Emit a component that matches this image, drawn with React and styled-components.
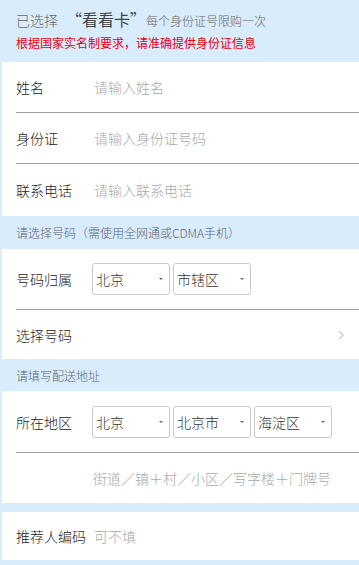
import React from "react";
import styled, { createGlobalStyle } from "styled-components";

const Global = createGlobalStyle`
  html, body { margin: 0; padding: 0; background: #d9ecfb; }
  body { font-family: "Noto Sans CJK SC", "Noto Sans", sans-serif; font-weight: 300; }
  * { box-sizing: border-box; }
`;

const Page = styled.div`
  width: 359px;
  height: 565px;
  overflow: hidden;
  background: #d9ecfb;
`;

const Header = styled.div`
  padding: 8px 16px 0 16px;
  height: 62px;
`;

const Title = styled.div`
  color: #666;
  font-size: 14px;
  line-height: 22px;
  white-space: nowrap;
`;

const Strong = styled.span`
  color: #444;
  font-size: 16px;
  font-weight: 400;
  margin-left: 8px;
`;

const Small = styled.span`
  font-size: 12px;
`;

const Warn = styled.div`
  color: #e60012;
  font-size: 12px;
  font-weight: 400;
  line-height: 20px;
  margin-top: 1px;
`;

const Panel = styled.div`
  background: #fff;
  margin-left: 2px;
  margin-top: ${(p) => p.$gap || 0}px;
`;

const Row = styled.div`
  display: flex;
  align-items: center;
  height: ${(p) => p.$h || 51}px;
  margin-left: 14px;
  border-bottom: ${(p) => (p.$last ? "none" : "1px solid #a0a0a0")};
`;

const Label = styled.div`
  width: ${(p) => p.$w || 78}px;
  flex: none;
  color: #222;
  font-size: 14px;
`;

const Placeholder = styled.div`
  color: #a8a8a8;
  font-size: 14px;
  white-space: nowrap;
`;

const Section = styled.div`
  height: ${(p) => p.$h || 32}px;
  display: flex;
  align-items: center;
  padding-left: 16px;
  color: #5c6670;
  font-size: 12px;
`;

const Selects = styled.div`
  display: flex;
  gap: 3px;
`;

const SelectBox = styled.div`
  width: 78px;
  height: 32px;
  border: 1px solid #c9c9c9;
  border-radius: 3px;
  display: flex;
  align-items: center;
  justify-content: space-between;
  padding: 0 6px 0 3px;
  color: #333;
  font-size: 14px;
  background: #fff;
`;

const Caret = styled.span`
  width: 0;
  height: 0;
  border-left: 2px solid transparent;
  border-right: 2px solid transparent;
  border-top: 2px solid #666;
`;

const Chevron = styled.div`
  margin-left: auto;
  margin-right: 14px;
  display: flex;
`;

const Select = ({ v }) => (
  <SelectBox>
    <span>{v}</span>
    <Caret />
  </SelectBox>
);

export default function App() {
  return (
    <Page>
      <Global />
      <Header>
        <Title>
          已选择<Strong>“看看卡”</Strong>
          <Small>每个身份证号限购一次</Small>
        </Title>
        <Warn>根据国家实名制要求，请准确提供身份证信息</Warn>
      </Header>
      <Panel>
        <Row>
          <Label>姓名</Label>
          <Placeholder>请输入姓名</Placeholder>
        </Row>
        <Row>
          <Label>身份证</Label>
          <Placeholder>请输入身份证号码</Placeholder>
        </Row>
        <Row $last $h={52}>
          <Label>联系电话</Label>
          <Placeholder>请输入联系电话</Placeholder>
        </Row>
      </Panel>
      <Section $h={33}>请选择号码（需使用全网通或CDMA手机）</Section>
      <Panel>
        <Row $h={61}>
          <Label $w={76}>号码归属</Label>
          <Selects>
            <Select v="北京" />
            <Select v="市辖区" />
          </Selects>
        </Row>
        <Row $last $h={49}>
          <Label>选择号码</Label>
          <Chevron>
            <svg width="8" height="12" viewBox="0 0 8 12">
              <path d="M2 2l4 4-4 4" fill="none" stroke="#ccc" strokeWidth="1.3" />
            </svg>
          </Chevron>
        </Row>
      </Panel>
      <Section $h={32}>请填写配送地址</Section>
      <Panel>
        <Row $h={62}>
          <Label $w={76}>所在地区</Label>
          <Selects>
            <Select v="北京" />
            <Select v="北京市" />
            <Select v="海淀区" />
          </Selects>
        </Row>
        <Row $last $h={50}>
          <Label $w={77} />
          <Placeholder>街道／镇＋村／小区／写字楼＋门牌号</Placeholder>
        </Row>
      </Panel>
      <Panel $gap={9}>
        <Row $last $h={48}>
          <Label>推荐人编码</Label>
          <Placeholder>可不填</Placeholder>
        </Row>
      </Panel>
    </Page>
  );
}
